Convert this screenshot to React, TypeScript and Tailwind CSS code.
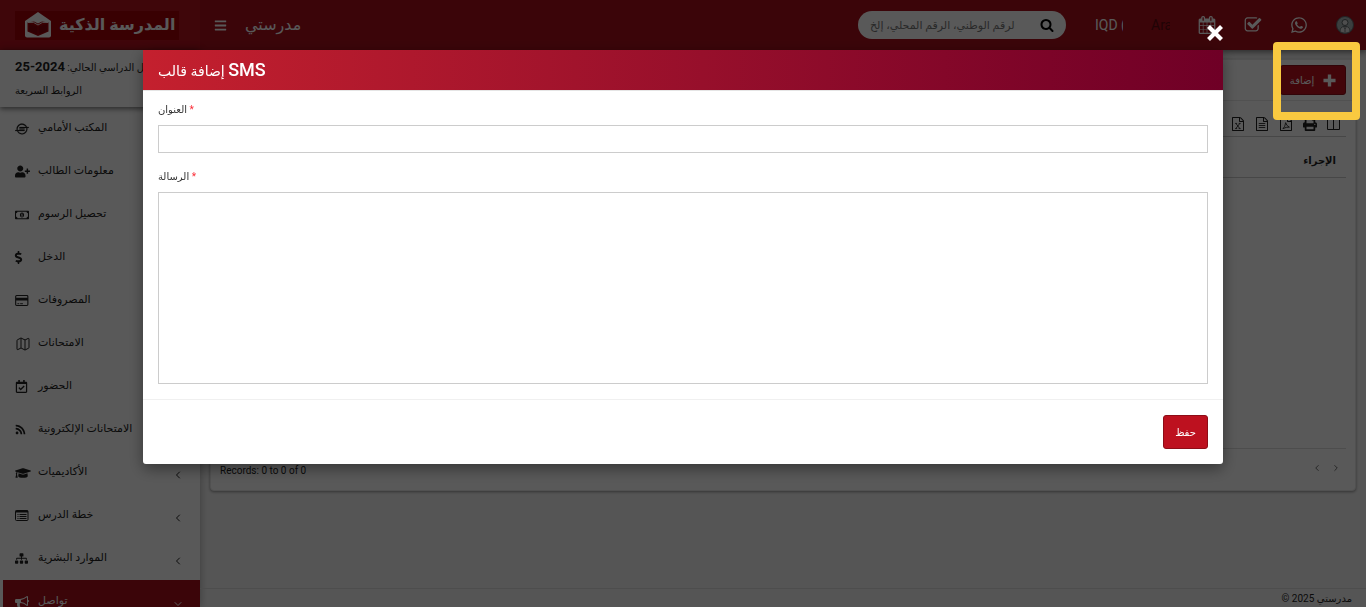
import React from 'react';
import {
    FaBars, FaWhatsapp, FaUserPlus, FaDollarSign, FaRegCalendarCheck, FaRss,
    FaGraduationCap, FaSitemap, FaIoxhost, FaRegMoneyBillAlt, FaPrint,
} from 'react-icons/fa';
import { ChevronDown, ChevronLeft, ChevronRight, Map as MapIcon } from 'lucide-react';

interface IconProps {
    className?: string;
}

interface MenuItem {
    label: string;
    icon: React.ReactNode;
    arrow?: 'left' | 'down';
    active?: boolean;
}

// --- ICONS ---

const SearchIcon: React.FC<IconProps> = ({ className }) => (
    <svg viewBox="0 0 1792 1792" fill="currentColor" className={className}>
        <path d="M1216 832q0-185-131.5-316.5t-316.5-131.5-316.5 131.5-131.5 316.5 131.5 316.5 316.5 131.5 316.5-131.5 131.5-316.5zm512 832q0 52-38 90t-90 38q-54 0-90-38l-343-342q-179 124-399 124-143 0-273.5-55.5t-225-150-150-225-55.5-273.5 55.5-273.5 150-225 225-150 273.5-55.5 273.5 55.5 225 150 150 225 55.5 273.5q0 220-124 399l343 343q37 37 37 90z" />
    </svg>
);

const CalendarIcon: React.FC<IconProps> = ({ className }) => (
    <svg viewBox="0 0 1792 1792" fill="currentColor" className={className}>
        <path d="M192 1664h288v-288h-288v288zm352 0h320v-288h-320v288zm-352-352h288v-320h-288v320zm352 0h320v-320h-320v320zm-352-384h288v-288h-288v288zm736 736h320v-288h-320v288zm-384-736h320v-288h-320v288zm768 736h288v-288h-288v288zm-384-352h320v-320h-320v320zm-352-864v-288q0-13-9.5-22.5t-22.5-9.5h-64q-13 0-22.5 9.5t-9.5 22.5v288q0 13 9.5 22.5t22.5 9.5h64q13 0 22.5-9.5t9.5-22.5zm736 864h288v-320h-288v320zm-384-384h320v-288h-320v288zm384 0h288v-288h-288v288zm32-480v-288q0-13-9.5-22.5t-22.5-9.5h-64q-13 0-22.5 9.5t-9.5 22.5v288q0 13 9.5 22.5t22.5 9.5h64q13 0 22.5-9.5t9.5-22.5zm384-64v1280q0 52-38 90t-90 38h-1408q-52 0-90-38t-38-90v-1280q0-52 38-90t90-38h128v-96q0-66 47-113t113-47h64q66 0 113 47t47 113v96h384v-96q0-66 47-113t113-47h64q66 0 113 47t47 113v96h128q52 0 90 38t38 90z" />
    </svg>
);

const TaskIcon: React.FC<IconProps> = ({ className }) => (
    <svg viewBox="0 0 1792 1792" fill="currentColor" className={className}>
        <path d="M1472 930v318q0 119-84.5 203.5t-203.5 84.5h-832q-119 0-203.5-84.5t-84.5-203.5v-832q0-119 84.5-203.5t203.5-84.5h832q63 0 117 25 15 7 18 23 3 17-9 29l-49 49q-10 10-23 10-3 0-9-2-23-6-45-6h-832q-66 0-113 47t-47 113v832q0 66 47 113t113 47h832q66 0 113-47t47-113v-254q0-13 9-22l64-64q10-10 23-10 6 0 12 3 20 8 20 29zm231-489l-814 814q-24 24-57 24t-57-24l-430-430q-24-24-24-57t24-57l110-110q24-24 57-24t57 24l263 263 647-647q24-24 57-24t57 24l110 110q24 24 24 57t-24 57z" />
    </svg>
);

const BullhornIcon: React.FC<IconProps> = ({ className }) => (
    <svg viewBox="0 0 1792 1792" fill="currentColor" className={className}>
        <path d="M1664 640q53 0 90.5 37.5t37.5 90.5-37.5 90.5-90.5 37.5v384q0 52-38 90t-90 38q-417-347-812-380-58 19-91 66t-31 100.5 40 92.5q-20 33-23 65.5t6 58 33.5 55 48 50 61.5 50.5q-29 58-111.5 83t-168.5 11.5-132-55.5q-7-23-29.5-87.5t-32-94.5-23-89-15-101 3.5-98.5 22-110.5h-122q-66 0-113-47t-47-113v-192q0-66 47-113t113-47h480q435 0 896-384 52 0 90 38t38 90v384zm-128 604v-954q-394 302-768 343v270q377 42 768 341z" />
    </svg>
);

// Sheet outline shared by the export buttons, the mark goes inside
const FileIcon: React.FC<{ children: React.ReactNode }> = ({ children }) => (
    <svg viewBox="0 0 1792 1792" className="size-[14px]" fill="none" stroke="currentColor" strokeWidth="110">
        <path fill="currentColor" stroke="none" d="M1596 380q28 28 48 76t20 88v1152q0 40-28 68t-68 28h-1344q-40 0-68-28t-28-68v-1600q0-40 28-68t68-28h896q40 0 88 20t76 48zm-444-244v376h376q-10-29-22-41l-313-313q-12-12-41-22zm384 1528v-1024h-416q-40 0-68-28t-28-68v-416h-768v1536h1280z" />
        {children}
    </svg>
);

const ColumnsIcon: React.FC<IconProps> = ({ className }) => (
    <svg viewBox="0 0 14 14" fill="none" stroke="currentColor" className={className}>
        <path d="M.5 2v10.500h12V2M6.500 2v10.500" />
        <path d="M0 2h13" strokeWidth="2" />
    </svg>
);

const CardIcon: React.FC<IconProps> = ({ className }) => (
    <svg viewBox="0 0 15 12" fill="none" stroke="currentColor" className={className}>
        <rect x=".6" y=".6" width="13.300" height="10.800" rx="1" strokeWidth="1.200" />
        <path d="M1 4.500h13" strokeWidth="3" />
        <path d="M2.500 9.500h2M5.500 9.500h3" />
    </svg>
);

const ListIcon: React.FC<IconProps> = ({ className }) => (
    <svg viewBox="0 0 14 11" fill="none" stroke="currentColor" className={className}>
        <rect x=".5" y=".5" width="12.500" height="10" rx="1" />
        <path d="M.5 1.500h12.500" strokeWidth="2" />
        <path d="M2.500 4.500h1M4.500 4.500h7M2.500 6.500h1M4.500 6.500h7M2.500 8.500h1M4.500 8.500h7" />
    </svg>
);

const CloseIcon: React.FC<IconProps> = ({ className }) => (
    <svg viewBox="0 0 16 16" stroke="currentColor" strokeWidth="4.200" className={className}>
        <path d="M1.500 1.500 14.500 14.500M14.500 1.500 1.500 14.500" />
    </svg>
);

const PlusIcon: React.FC<IconProps> = ({ className }) => (
    <svg viewBox="0 0 14 14" stroke="currentColor" strokeWidth="3.600" className={className}>
        <path d="M7 .5v13M.5 7h13" />
    </svg>
);

const LogoMark: React.FC<IconProps> = ({ className }) => (
    <svg viewBox="0 0 26 26" className={className}>
        <path d="M13 0 26 9v14.500q0 2-2 2H2q-2 0-2-2V9Z" fill="#fff" />
        <path d="M2.500 10.500 9 9.500l4 2 4-2 6.500 1V19.500L13 24 2.500 19.500Z" fill="#a30008" />
        <path d="M4 12 12.500 14.500v8L4 19ZM22 12 13.500 14.500v8L22 19Z" fill="#86000a" />
        <path d="M3 10.500q6-1.500 10 2.500 4-4 10-2.500" fill="none" stroke="#fff" strokeWidth=".9" />
    </svg>
);

const Avatar: React.FC<IconProps> = ({ className }) => (
    <svg viewBox="0 0 18 18" className={className}>
        <circle cx="9" cy="9" r="8.500" fill="#a9b4b6" stroke="#5d6568" />
        <path d="M4 16q0-5 3.500-5.500h3q3.500.5 3.500 5.500-5 2.500-10 0Z" fill="#dedede" stroke="#4d5557" strokeWidth=".7" />
        <circle cx="9" cy="6.500" r="3" fill="#dedede" stroke="#4d5557" strokeWidth=".9" />
        <path d="M7.500 10.500 9 13l1.500-2.500M9 13v3.500" fill="none" stroke="#4d5557" strokeWidth=".7" />
    </svg>
);

const menu: MenuItem[] = [
    { label: 'المكتب الأمامي', icon: <FaIoxhost stroke="currentColor" strokeWidth="8" /> },
    { label: 'معلومات الطالب', icon: <FaUserPlus className="size-[15px]" /> },
    { label: 'تحصيل الرسوم', icon: <FaRegMoneyBillAlt /> },
    { label: 'الدخل', icon: <FaDollarSign className="-ml-[3px] size-[13px]" /> },
    { label: 'المصروفات', icon: <CardIcon className="h-[11px] w-[14px]" /> },
    { label: 'الامتحانات', icon: <MapIcon strokeWidth={1.5} className="size-[16px]" /> },
    { label: 'الحضور', icon: <FaRegCalendarCheck className="size-[13px]" /> },
    { label: 'الامتحانات الإلكترونية', icon: <FaRss className="size-[11px]" /> },
    { label: 'الأكاديميات', icon: <FaGraduationCap className="size-[16px]" />, arrow: 'left' },
    { label: 'خطة الدرس', icon: <ListIcon className="h-[11px] w-[14px]" />, arrow: 'left' },
    { label: 'الموارد البشرية', icon: <FaSitemap className="size-[13px]" />, arrow: 'left' },
    { label: 'تواصل', icon: <BullhornIcon className="size-[14px]" />, arrow: 'down', active: true },
];

// --- PAGE SECTIONS ---

const TopBar: React.FC = () => (
    <header className="flex h-[50px] shrink-0 bg-[#a80f1b] text-white shadow-[0_2px_6px_rgba(0,0,0,0.5)]">
        <div className="flex w-[200px] shrink-0 items-center bg-[#b5121e] pl-[15px]">
            <a href="#" className="flex h-[29px] w-[164px] items-center gap-2 bg-[#a30008] pl-[10px]">
                <LogoMark className="size-[26px]" />
                <span className="whitespace-nowrap text-[16px] font-bold leading-none">المدرسة الذكية</span>
            </a>
        </div>
        <div className="flex flex-1 items-center">
            <button type="button" aria-label="القائمة" className="ml-[14px] p-0">
                <FaBars className="size-[13px]" />
            </button>
            <h1 className="ml-[18px] text-[16px] leading-none">مدرستي</h1>
            <form className="ml-auto flex h-7 w-[208px] items-center rounded-full bg-white pl-3">
                <input
                    type="text"
                    aria-label="بحث"
                    placeholder="بحث باسم الطالب، رقم السجل، الرقم الوطني، الرقم المحلي، إلخ"
                    className="h-7 w-[145px] bg-transparent text-[11px] outline-none placeholder:text-[#777]"
                />
                <button type="button" aria-label="بحث" className="ml-[25px] text-black">
                    <SearchIcon className="size-[14px]" />
                </button>
            </form>
            <select aria-label="العملة" className="ml-[29px] w-[28px] appearance-none overflow-hidden bg-transparent text-[14px]">
                <option>IQD (د.ع)</option>
            </select>
            <select aria-label="اللغة" className="ml-[28px] w-[19px] appearance-none overflow-hidden bg-transparent text-[14px] text-[#5c0a10]">
                <option>Arabic</option>
            </select>
            <div className="ml-[28px] mr-3 flex items-center gap-[28px]">
                <a href="#" aria-label="التقويم"><CalendarIcon className="size-[18px]" /></a>
                <a href="#" aria-label="المهام"><TaskIcon className="size-[18px]" /></a>
                <a href="#" aria-label="واتساب"><FaWhatsapp className="size-[18px]" /></a>
                <a href="#" aria-label="الحساب"><Avatar className="size-[18px]" /></a>
            </div>
        </div>
    </header>
);

const Sidebar: React.FC = () => (
    <aside className="w-[200px] shrink-0 bg-white text-[#222] shadow-[0_0_8px_rgba(0,0,0,0.3)]">
        <div className="flex h-[57px] flex-col justify-center gap-[3px] whitespace-nowrap pl-[15px] text-[10px] leading-5 shadow-[0_2px_5px_rgba(0,0,0,0.5)]">
            <p>الفصل الدراسي الحالي: <span className="text-[13px] font-bold">2024-25</span></p>
            <a href="#">الروابط السريعة</a>
        </div>
        <nav>
            {menu.map(item => (
                <a
                    key={item.label}
                    href="#"
                    className={`flex h-[43px] items-center border-l-[3px] pl-3 pr-4 text-[11px] ${item.active ? 'border-white bg-[#a80f1b] bg-clip-padding text-white' : 'border-transparent'}`}
                >
                    <span className="w-[23px] shrink-0 text-[14px]">{item.icon}</span>
                    <span className="flex-1 whitespace-nowrap">{item.label}</span>
                    {item.arrow === 'left' && <ChevronLeft className="mt-1 size-3" />}
                    {item.arrow === 'down' && <ChevronDown className="mt-1 size-3" />}
                </a>
            ))}
        </nav>
    </aside>
);

const TemplateList: React.FC = () => (
    <section className="mx-[10px] mt-[9px] rounded-[4px] border border-[#e8e8e8] bg-white px-[9px] text-[#222] shadow-[0_1px_3px_rgba(0,0,0,0.4)]">
        <div className="-mx-[9px] flex h-[41px] items-center justify-end border-b border-[#e8e8e8] px-[9px]">
            <div className="relative">
                <button type="button" className="flex h-[30px] w-[66px] items-center justify-center gap-[9px] rounded-[3px] border border-[#8d0d17] bg-[#bd111f] text-[10px] text-white">
                    إضافة
                    <PlusIcon className="size-[13px]" />
                </button>
                <div className="pointer-events-none absolute -bottom-[25px] -left-[7px] -right-[14px] -top-[23px] z-50 rounded-[4px] border-8 border-[#f9c940]" />
            </div>
        </div>
        <div className="flex h-[36px] items-end justify-end gap-[10px] border-b border-[#ccc] pb-[5px] pr-[5px] text-[14px]">
            <button type="button" aria-label="Excel">
                <FileIcon><path d="M620 820 1130 1480M1130 820 620 1480M540 820h240M980 820h240M540 1480h240M980 1480h240" /></FileIcon>
            </button>
            <button type="button" aria-label="CSV">
                <FileIcon><path d="M480 832h832M480 1088h832M480 1344h832" /></FileIcon>
            </button>
            <button type="button" aria-label="PDF">
                <FileIcon><path d="M500 1500Q800 1250 850 720q80 400 480 580-400-50-830 200" /></FileIcon>
            </button>
            <button type="button" aria-label="طباعة"><FaPrint /></button>
            <button type="button" aria-label="الأعمدة"><ColumnsIcon className="size-[14px]" /></button>
        </div>
        <table className="w-full">
            <thead>
                <tr className="h-10 border-b border-[#ccc]">
                    <th className="pr-[10px] pt-2 text-right text-[10px] font-bold">الإجراء</th>
                </tr>
            </thead>
            <tbody>
                <tr className="h-[271px] border-b border-[#ddd]">
                    <td />
                </tr>
            </tbody>
        </table>
        <div className="flex h-[41px] items-start justify-between pr-[5px] pt-[14px]">
            <p className="text-[10px] leading-4">Records: 0 to 0 of 0</p>
            <div className="flex gap-[9px] text-[#555]">
                <button type="button" aria-label="السابق"><ChevronLeft className="size-[10px]" /></button>
                <button type="button" aria-label="التالي"><ChevronRight className="size-[10px]" /></button>
            </div>
        </div>
    </section>
);

const AddTemplateModal: React.FC = () => (
    <div className="fixed inset-0 z-40 bg-black/65 pt-[50px]">
        <div role="dialog" aria-labelledby="modal-title" className="relative mx-auto w-[80%] max-w-[1080px] rounded-b-[3px] bg-white shadow-[0_5px_15px_rgba(0,0,0,0.4)]">
            <button type="button" aria-label="إغلاق" className="absolute -top-[25px] right-0 text-white">
                <CloseIcon className="size-4" />
            </button>
            <div className="flex h-10 items-center bg-linear-to-r from-[#c4202e] to-[#6f0026] px-[15px] text-white">
                <h4 id="modal-title" className="text-[14px] font-medium leading-5">إضافة قالب <span className="text-[18px]">SMS</span></h4>
            </div>
            <form className="text-[10px] text-[#333]">
                <div className="border-t border-[#e5e5e5] px-[15px] pb-[15px] pt-[9px]">
                    <label htmlFor="title" className="block h-[25px] leading-5">
                        العنوان <span className="text-red-500">*</span>
                    </label>
                    <input id="title" type="text" className="block h-7 w-full border border-[#ccc] px-3 outline-none" />
                    <label htmlFor="message" className="mt-[14px] block h-[25px] leading-5">
                        الرسالة <span className="text-red-500">*</span>
                    </label>
                    <textarea id="message" className="block h-48 w-full resize-none border border-[#ccc] px-3 outline-none" />
                </div>
                <div className="flex justify-end border-t border-[#f0f0f0] p-[15px]">
                    <button type="button" className="h-[34px] w-[45px] rounded-[3px] border border-[#8d0d17] bg-[#bd111f] text-[10px] text-white">
                        حفظ
                    </button>
                </div>
            </form>
        </div>
    </div>
);

const App: React.FC = () => (
    <div className="flex h-screen flex-col overflow-hidden bg-[#f4f4f4] font-[Roboto,'Liberation_Sans','DejaVu_Sans',sans-serif]">
        <TopBar />
        <div className="flex min-h-0 flex-1">
            <Sidebar />
            <main className="flex min-w-0 flex-1 flex-col">
                <TemplateList />
                <footer className="mt-auto flex h-[19px] items-center justify-end border-t border-[#ddd] pr-[14px] text-[10px] text-[#222]">
                    © 2025 مدرستي
                </footer>
            </main>
        </div>
        <AddTemplateModal />
    </div>
);

export default App;
